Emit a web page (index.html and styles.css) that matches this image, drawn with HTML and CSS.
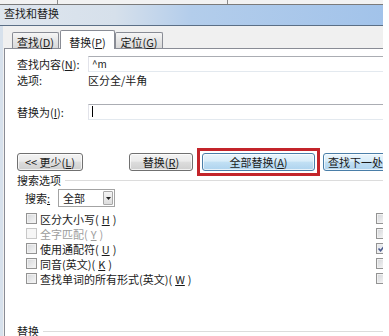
FILE: index.html
```html
<!DOCTYPE html>
<html lang="zh-CN">
<head>
<meta charset="utf-8">
<title>查找和替换</title>
<link rel="stylesheet" href="styles.css">
</head>
<body>
<div class="window">
  <div class="topstrip"></div>
  <div class="titlebar">查找和替换</div>
  <div class="dlg">
    <div class="tabs">
      <div class="tab t1">查找(<u>D</u>)</div>
      <div class="tab active t2">替换(<u>P</u>)</div>
      <div class="tab t3">定位(<u>G</u>)</div>
    </div>
    <div class="panel">
      <div class="fields">
        <div class="lbl">查找内容(<u>N</u>):</div>
        <div class="input">^m</div>
        <div class="lbl">选项:</div>
        <div class="lbl">区分全/半角</div>
        <div class="lbl rep">替换为(<u>I</u>):</div>
        <div class="input rep"><span class="caret"></span></div>
      </div>
      <div class="buttons">
        <button class="btn less">&lt;&lt; 更少(<u>L</u>)</button>
        <button class="btn replace">替换(<u>R</u>)</button>
        <span class="mark"><button class="btn blue all">全部替换(<u>A</u>)</button></span>
        <button class="btn blue next">查找下一处</button>
      </div>
      <div class="group">搜索选项</div>
      <div class="search-row">
        <span class="slabel">搜索<u>:</u></span>
        <div class="select">
          <span>全部</span>
          <span class="drop"><svg width="5" height="3" viewBox="0 0 5 3"><path d="M0 0H5L2.5 3Z" fill="#222"/></svg></span>
        </div>
      </div>
      <div class="checks">
        <div class="cb-item"><span class="box"></span>区分大小写(<u>H</u>)</div>
        <span class="box"></span>
        <div class="cb-item disabled"><span class="box"></span>全字匹配(<u>Y</u>)</div>
        <span class="box"></span>
        <div class="cb-item"><span class="box"></span>使用通配符(<u>U</u>)</div>
        <span class="box checked"><svg width="9" height="9" viewBox="0 0 9 9"><path d="M1.5 4.5L3.6 6.8L7.6 1.8" fill="none" stroke="#4a5a8c" stroke-width="1.6"/></svg></span>
        <div class="cb-item"><span class="box"></span>同音(英文)(<u>K</u>)</div>
        <span class="box"></span>
        <div class="cb-item"><span class="box"></span>查找单词的所有形式(英文)(<u>W</u>)</div>
        <span class="box"></span>
      </div>
      <div class="group bottom">替换</div>
    </div>
  </div>
</div>
</body>
</html>
```

FILE: styles.css
```css
* { box-sizing: border-box; }
html, body { margin: 0; padding: 0; background: #fff; }
body {
  font-family: "Noto Sans CJK SC", "Noto Sans", sans-serif;
  font-size: 11px;
  color: #1a1a1a;
}
u { text-decoration: underline; text-underline-offset: 1px; }

.window {
  width: 383px;
  height: 336px;
  overflow: hidden;
  background: #f0f0f0;
  display: flex;
  flex-direction: column;
}
.topstrip {
  flex: none;
  height: 5px;
  background:
    linear-gradient(#8a8a8a, #8a8a8a) 57px 0 / 1px 4px no-repeat,
    linear-gradient(#8a8a8a, #8a8a8a) 227px 0 / 1px 4px no-repeat,
    #f2f2f2;
  border-bottom: 1px solid #7b7b7b;
}
.titlebar {
  flex: none;
  height: 21px;
  padding-left: 4px;
  line-height: 17px;
  background: linear-gradient(to right, #dfe6ee 0%, #d6e0eb 30%, #b3cdeb 50%, #a2c3ea 100%);
  border-bottom: 1px solid #5b6f86;
  color: #1c1c1c;
  white-space: nowrap;
}
.dlg {
  flex: 1;
  display: flex;
  flex-direction: column;
  border-left: 3px solid #d7e1ec;
  padding: 4px 0 0 1px;
  min-height: 0;
}
.tabs {
  flex: none;
  display: flex;
  align-items: flex-end;
  height: 19px;
  margin-left: 8px;
  margin-bottom: -1px;
  position: relative;
  z-index: 1;
}
.tab {
  flex: none;
  height: 16px;
  margin-bottom: 1px;
  border: 1px solid #898c95;
  border-bottom: none;
  border-radius: 2px 2px 0 0;
  background: linear-gradient(#f6f6f6, #e6e6e6 50%, #d9d9d9);
  text-align: center;
  line-height: 16px;
  padding-top: 1px;
  white-space: nowrap;
}
.t1 { width: 47px; }
.t2 { width: 55px; margin-left: 1px; }
.t3 { width: 48px; }
.tab.active {
  height: 19px;
  margin-bottom: 0;
  background: #fff;
  padding-top: 3px;
}
.panel {
  flex: 1;
  display: flex;
  flex-direction: column;
  background: #fff;
  border-left: 1px solid #898c95;
  border-top: 1px solid #898c95;
  min-width: 0;
}
.fields {
  display: grid;
  grid-template-columns: 71px 1fr;
  margin-top: 7px;
  padding-left: 12px;
}
.lbl {
  height: 16px;
  line-height: 16px;
  white-space: nowrap;
}
.input {
  height: 16px;
  width: 400px;
  border: 1px solid;
  border-color: #abadb3 #dbdfe6 #e3e9ef #e2e3ea;
  background: #fff;
  padding-left: 3px;
  line-height: 13px;
  font-size: 10px;
}
.rep { margin-top: 16px; }
.caret {
  display: inline-block;
  width: 1px;
  height: 11px;
  margin-top: 1px;
  background: #000;
  vertical-align: top;
}
.buttons {
  display: flex;
  align-items: center;
  height: 18px;
  margin-top: 33px;
  padding-left: 12px;
}
.btn {
  flex: none;
  height: 18px;
  padding: 0;
  font: inherit;
  line-height: 15px;
  color: #1a1a1a;
  border: 1px solid #707070;
  border-radius: 3px;
  background: linear-gradient(#f3f3f3 0%, #ebebeb 45%, #dddddd 50%, #cfcfcf 100%);
  box-shadow: inset 0 0 0 1px rgba(255, 255, 255, 0.7);
  white-space: nowrap;
}
.blue {
  border-color: #4a7ea8;
  background: linear-gradient(#eaf5fc 0%, #d9edf9 45%, #c2e0f4 50%, #aed3ee 100%);
}
.less { width: 66px; }
.replace { width: 64px; margin-left: 46px; }
.mark {
  flex: none;
  display: flex;
  margin: -5px 0 -5px 4px;
  padding: 2px;
  border: 3px solid #c3242a;
}
.all { width: 113px; }
.next {
  width: 80px;
  margin-left: 3px;
  text-align: left;
  padding-left: 4px;
}
.group {
  display: flex;
  align-items: center;
  margin-top: 2px;
  padding-left: 12px;
  line-height: 14px;
  white-space: nowrap;
}
.group::after {
  content: "";
  flex: 1;
  border-top: 1px solid #dcdcdc;
  margin-left: 4px;
}
.group.bottom { margin-top: 38px; }
.search-row {
  display: flex;
  align-items: center;
  height: 18px;
  margin-top: 2px;
  padding-left: 20px;
}
.slabel { width: 33px; flex: none; }
.select {
  flex: none;
  width: 57px;
  height: 18px;
  display: flex;
  align-items: center;
  padding-left: 4px;
  border: 1px solid #a3a3a3;
  background: #fff;
}
.drop {
  margin-left: auto;
  margin-right: 1px;
  width: 10px;
  height: 14px;
  display: flex;
  align-items: center;
  justify-content: center;
  border: 1px solid #a8a8a8;
  border-radius: 1px;
  background: linear-gradient(#f4f4f4, #dedede);
}
.checks {
  display: grid;
  grid-template-columns: 350px 11px;
  grid-auto-rows: 15px;
  align-items: center;
  margin-top: 4px;
  padding-left: 21px;
}
.cb-item {
  display: flex;
  align-items: center;
  gap: 3px;
  white-space: nowrap;
}
.box {
  flex: none;
  width: 11px;
  height: 11px;
  display: flex;
  align-items: center;
  justify-content: center;
  border: 1px solid #939393;
  background: linear-gradient(135deg, #d4d6d9 0%, #f7f7f7 100%);
  box-shadow: inset 0 0 0 1px #f0f0f0;
}
.disabled { color: #9d9d9d; }
.disabled .box {
  border-color: #c8c8c8;
  background: #f6f6f6;
  box-shadow: none;
}
.box.checked {
  background: linear-gradient(135deg, #dfe3ea 0%, #f7f7f7 100%);
}
```
